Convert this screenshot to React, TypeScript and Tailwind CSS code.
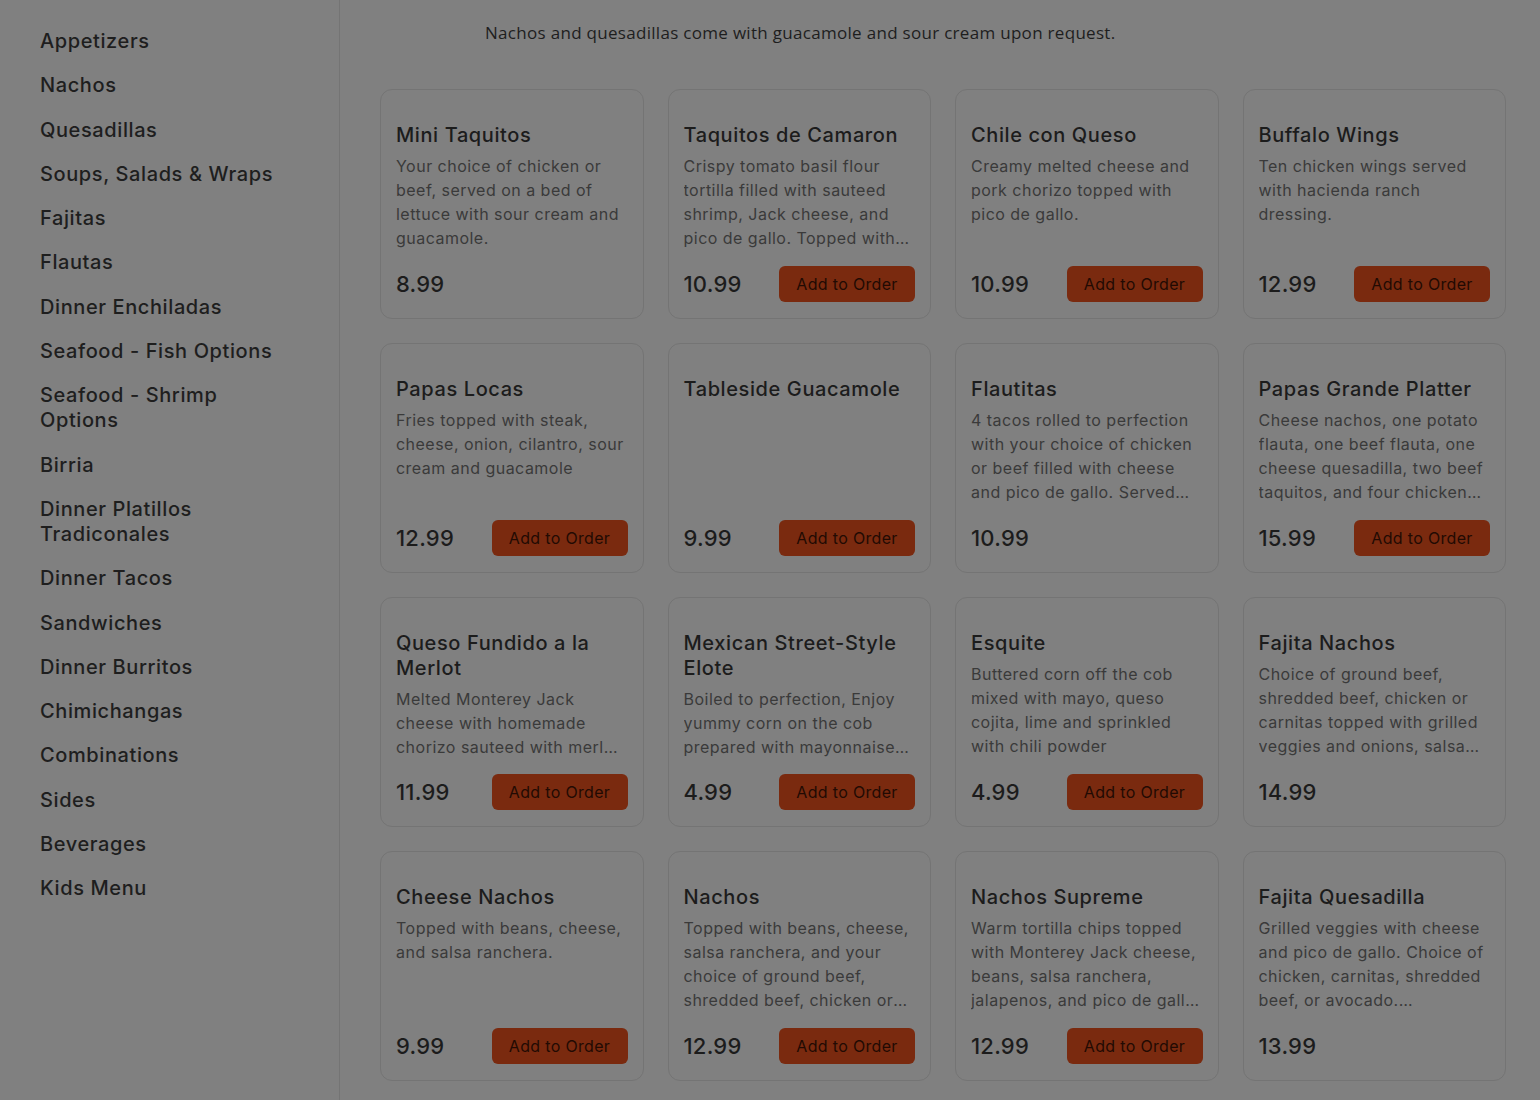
import React from "react";

type Item = { title: string; desc?: string; price: string; button: boolean; clamp: 3 | 4 };

const items: Item[] = [
  { title: "Mini Taquitos", desc: "Your choice of chicken or beef, served on a bed of lettuce with sour cream and guacamole.", price: "8.99", button: false, clamp: 4 },
  { title: "Taquitos de Camaron", desc: "Crispy tomato basil flour tortilla filled with sauteed shrimp, Jack cheese, and pico de gallo. Topped with chipotle sauce.", price: "10.99", button: true, clamp: 4 },
  { title: "Chile con Queso", desc: "Creamy melted cheese and pork chorizo topped with pico de gallo.", price: "10.99", button: true, clamp: 4 },
  { title: "Buffalo Wings", desc: "Ten chicken wings served with hacienda ranch dressing.", price: "12.99", button: true, clamp: 4 },
  { title: "Papas Locas", desc: "Fries topped with steak, cheese, onion, cilantro, sour cream and guacamole", price: "12.99", button: true, clamp: 4 },
  { title: "Tableside Guacamole", price: "9.99", button: true, clamp: 4 },
  { title: "Flautitas", desc: "4 tacos rolled to perfection with your choice of chicken or beef filled with cheese and pico de gallo. Served with sour cream.", price: "10.99", button: false, clamp: 4 },
  { title: "Papas Grande Platter", desc: "Cheese nachos, one potato flauta, one beef flauta, one cheese quesadilla, two beef taquitos, and four chicken wings.", price: "15.99", button: true, clamp: 4 },
  { title: "Queso Fundido a la Merlot", desc: "Melted Monterey Jack cheese with homemade chorizo sauteed with merlot wine and served hot.", price: "11.99", button: true, clamp: 3 },
  { title: "Mexican Street-Style Elote", desc: "Boiled to perfection, Enjoy yummy corn on the cob prepared with mayonnaise and sprinkled with cheese.", price: "4.99", button: true, clamp: 3 },
  { title: "Esquite", desc: "Buttered corn off the cob mixed with mayo, queso cojita, lime and sprinkled with chili powder", price: "4.99", button: true, clamp: 4 },
  { title: "Fajita Nachos", desc: "Choice of ground beef, shredded beef, chicken or carnitas topped with grilled veggies and onions, salsa ranchera and cheese.", price: "14.99", button: false, clamp: 4 },
  { title: "Cheese Nachos", desc: "Topped with beans, cheese, and salsa ranchera.", price: "9.99", button: true, clamp: 4 },
  { title: "Nachos", desc: "Topped with beans, cheese, salsa ranchera, and your choice of ground beef, shredded beef, chicken or carnitas.", price: "12.99", button: true, clamp: 4 },
  { title: "Nachos Supreme", desc: "Warm tortilla chips topped with Monterey Jack cheese, beans, salsa ranchera, jalapenos, and pico de gallo with sour cream.", price: "12.99", button: true, clamp: 4 },
  { title: "Fajita Quesadilla", desc: "Grilled veggies with cheese and pico de gallo. Choice of chicken, carnitas, shredded beef, or avocado. Accompanied with rice and beans.", price: "13.99", button: false, clamp: 4 },
];

const categories = [
  "Appetizers",
  "Nachos",
  "Quesadillas",
  "Soups, Salads & Wraps",
  "Fajitas",
  "Flautas",
  "Dinner Enchiladas",
  "Seafood - Fish Options",
  "Seafood - Shrimp Options",
  "Birria",
  "Dinner Platillos Tradiconales",
  "Dinner Tacos",
  "Sandwiches",
  "Dinner Burritos",
  "Chimichangas",
  "Combinations",
  "Sides",
  "Beverages",
  "Kids Menu",
];

const font = { fontFamily: "Inter, 'Noto Sans', sans-serif" };

function Card({ item }: { item: Item }) {
  return (
    <div className="flex h-[230px] flex-col rounded-xl border border-[#747474] px-[15px] pb-4 pt-[33px]">
      <div className="text-[20px] font-medium leading-[25px] tracking-[0.03em] text-[#1c1c1c]">{item.title}</div>
      {item.desc && (
        <div
          className={
            "mt-[6px] text-[16px] leading-6 tracking-[0.03em] text-[#3a3a3a] " +
            (item.clamp === 3 ? "line-clamp-3" : "line-clamp-4")
          }
        >
          {item.desc}
        </div>
      )}
      <div className="mt-auto flex h-9 items-center justify-between">
        <span className="text-[22px] font-medium tracking-[0.01em] text-[#1c1c1c]">{item.price}</span>
        {item.button && (
          <button className="flex h-9 w-[136px] items-center justify-center rounded-md bg-[#7a2a0f]">
            <span className="text-[16px] tracking-[0.02em] text-[#220a03]">Add to Order</span>
          </button>
        )}
      </div>
    </div>
  );
}

export default function App() {
  return (
    <div className="flex min-h-[1100px] w-[1540px] bg-[#808080]" style={font}>
      <aside className="w-[340px] shrink-0 border-r border-[#747474] pl-10 pt-[29px]">
        <ul className="flex max-w-[245px] flex-col gap-[19.3px]">
          {categories.map((c) => (
            <li key={c} className="text-[20px] font-medium leading-[25px] tracking-[0.03em] text-[#1e1e1e]">
              {c}
            </li>
          ))}
        </ul>
      </aside>
      <main className="flex-1 pb-10">
        <p
          className="pl-[145px] pt-[21px] text-[17px] leading-6 tracking-[0.3px] text-[#1e1e1e]"
          style={{ fontFamily: "'Open Sans', sans-serif" }}
        >
          Nachos and quesadillas come with guacamole and sour cream upon request.
        </p>
        <div className="ml-10 mr-[34px] mt-[44px] grid grid-cols-4 gap-6">
          {items.map((it) => (
            <Card key={it.title} item={it} />
          ))}
        </div>
      </main>
    </div>
  );
}
